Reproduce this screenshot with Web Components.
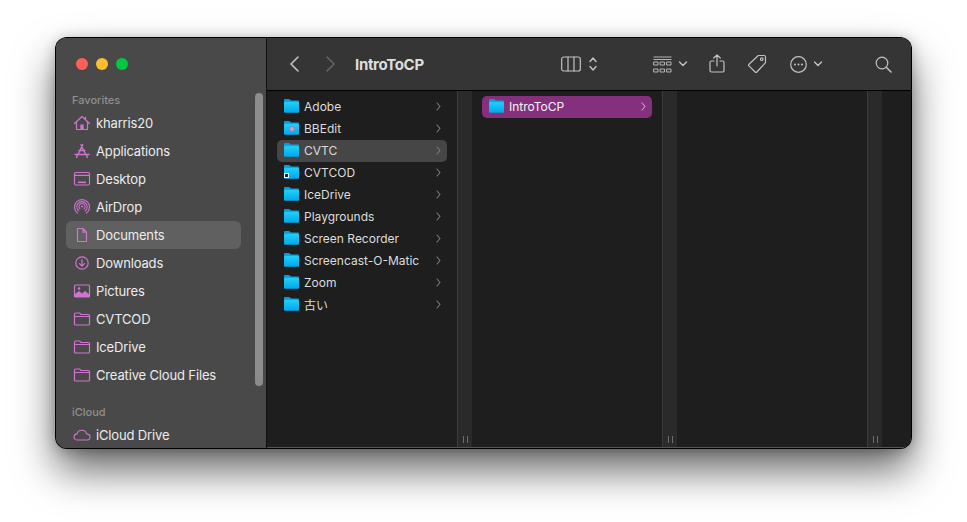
<!DOCTYPE html>
<html lang="en"><head><meta charset="utf-8"><title>Finder</title>
<style>
html,body{margin:0;background:#fff;height:522px;overflow:hidden}
body{font-family:Inter,"Noto Sans CJK JP",sans-serif;-webkit-font-smoothing:antialiased}
</style></head><body>
<finder-window>
  <finder-sidebar slot="side">
    <side-label>Favorites</side-label>
    <side-item icon="home">kharris20</side-item>
    <side-item icon="apps">Applications</side-item>
    <side-item icon="desktop">Desktop</side-item>
    <side-item icon="airdrop">AirDrop</side-item>
    <side-item icon="doc" selected>Documents</side-item>
    <side-item icon="download">Downloads</side-item>
    <side-item icon="pictures">Pictures</side-item>
    <side-item icon="folder">CVTCOD</side-item>
    <side-item icon="folder">IceDrive</side-item>
    <side-item icon="folder">Creative Cloud Files</side-item>
    <side-label second>iCloud</side-label>
    <side-item icon="cloud">iCloud Drive</side-item>
  </finder-sidebar>
  <finder-toolbar slot="bar" title-text="IntroToCP"></finder-toolbar>
  <finder-column slot="cols">
    <file-row>Adobe</file-row>
    <file-row badge="bb">BBEdit</file-row>
    <file-row state="grey">CVTC</file-row>
    <file-row badge="alias">CVTCOD</file-row>
    <file-row>IceDrive</file-row>
    <file-row>Playgrounds</file-row>
    <file-row>Screen Recorder</file-row>
    <file-row>Screencast-O-Matic</file-row>
    <file-row>Zoom</file-row>
    <file-row>古い</file-row>
  </finder-column>
  <finder-column slot="cols"><file-row state="active">IntroToCP</file-row></finder-column>
  <finder-column slot="cols"></finder-column>
  <finder-column slot="cols" last></finder-column>
</finder-window>
<script>
const PINK='#cf74cf';
const SW='1.200';
const ICONS={
home:`<path d="M1.500 9.500 9 2.500l7.500 7M3.500 8v7.500h11V8M12.500 3.200v2.800" fill="none" stroke="${PINK}" stroke-width="${SW}" stroke-linejoin="round" stroke-linecap="round"/><rect x="7.300" y="10.500" width="3.400" height="5" fill="${PINK}"/>`,
apps:`<path d="M9.800 2.500 4.800 13M7.800 2.500l5.200 10.500M2 12.500h14M4.200 13 3.500 15.500M13.500 13l.8 2.500M6 8.500h6" fill="none" stroke="${PINK}" stroke-width="1.300" stroke-linecap="round"/>`,
desktop:`<rect x="1.500" y="2.500" width="15" height="12.500" rx="1.500" fill="none" stroke="${PINK}" stroke-width="${SW}"/><path d="M1.500 5.300h15" stroke="${PINK}" stroke-width="${SW}"/><rect x="5" y="11.500" width="8" height="1.600" fill="${PINK}"/>`,
airdrop:`<g fill="none" stroke="${PINK}" stroke-width="1.100" stroke-linecap="round"><path d="M4.600 15.200a7.500 7.500 0 1 1 8.800 0"/><path d="M5.800 12.900a5.200 5.200 0 1 1 6.400 0"/><path d="M7 10.800a3 3 0 1 1 4 0"/></g><circle cx="9" cy="8.500" r="1.100" fill="${PINK}"/>`,
doc:`<path d="M4.500 2.500h5.500l3.500 3.700v9.300h-9zM10 2.500v3.700h3.500" fill="none" stroke="${PINK}" stroke-width="${SW}" stroke-linejoin="round"/>`,
download:`<circle cx="9" cy="9" r="6.200" fill="none" stroke="${PINK}" stroke-width="${SW}"/><path d="M9 5.500v6.500M6.500 9.700 9 12.200l2.500-2.500" fill="none" stroke="${PINK}" stroke-width="${SW}" stroke-linecap="round" stroke-linejoin="round"/>`,
pictures:`<rect x="1.500" y="3" width="15" height="12" rx="1" fill="none" stroke="${PINK}" stroke-width="${SW}"/><path d="M1.500 15v-2.500l4.500-3.500 3 2.500 3-2.500 4.500 3.500V15z" fill="${PINK}"/><circle cx="6" cy="6.500" r="1.300" fill="${PINK}"/>`,
folder:`<path d="M1.500 5.500V4.300C1.500 3.600 2 3 2.700 3h3.600c.5 0 .8.200 1.100.6l.6.900h7c.7 0 1.500.4 1.500 1v8.700c0 .5-.5.800-1 .8H2.500c-.6 0-1-.3-1-.8V5.500zM1.500 6.500h15" fill="none" stroke="${PINK}" stroke-width="${SW}" stroke-linejoin="round"/>`,
cloud:`<path d="M4.500 14C2.500 14 1 12.600 1 10.900c0-1.600 1.200-2.800 2.900-3C4.600 5.600 6.400 4.200 8.700 4.200c2.500 0 4.300 1.500 4.900 3.700 1.900.2 3.400 1.400 3.400 3 0 1.700-1.400 3.100-3.400 3.100z" fill="none" stroke="${PINK}" stroke-width="1.100"/>`
};

function tpl(css,html){const t=document.createElement('template');t.innerHTML=`<style>${css}</style>${html}`;return t}
function define(name,t,extra){customElements.define(name,class extends HTMLElement{
  constructor(){super();this.attachShadow({mode:'open'}).appendChild(t.content.cloneNode(true));}
  connectedCallback(){extra&&extra.call(this,this.shadowRoot)}
})}

define('finder-window',tpl(`
:host{display:block;position:absolute;left:56px;top:38px;width:855px;height:410px;border-radius:11px;
 box-shadow:0 0 0 1px #000,0 22px 42px rgba(0,0,0,.6),0 2px 14px rgba(0,0,0,.28);}
.w{display:grid;grid-template-columns:210px 1fr;height:100%;border-radius:11px;overflow:hidden;background:#1e1e1e}
.main{display:flex;flex-direction:column;min-width:0;border-left:1px solid #111}
.cols{flex:1;display:flex;min-height:0;position:relative;border-bottom:1px solid #555}
`,`<div class="w"><slot name="side"></slot><div class="main"><slot name="bar"></slot><div class="cols"><slot name="cols"></slot></div></div></div>`));

define('finder-sidebar',tpl(`
:host{display:block;background:#494949;position:relative;height:100%;overflow:hidden}
.lights{display:flex;gap:8px;padding:20px 0 0 20px;height:12px}
.lights i{width:12px;height:12px;border-radius:50%}
.list{display:flex;flex-direction:column;padding:21px 25px 0 10px}
.thumb{position:absolute;left:199px;top:55px;width:8px;height:293px;border-radius:4px;background:#8c8c8c}
`,`<div class="lights"><i style="background:#ff5f57"></i><i style="background:#febc2e"></i><i style="background:#00c941"></i></div>
<div class="list"><slot></slot></div><div class="thumb"></div>`));

define('side-label',tpl(`
:host{display:block;height:18px;line-height:18px;padding-left:6px;font-size:11px;font-weight:500;color:#8f8f8f}
:host([second]){margin-top:14px}
`,`<slot></slot>`));

define('side-item',tpl(`
:host{display:flex;align-items:center;height:28px;border-radius:6px;padding-left:7px;gap:5px;font-size:13px;color:#ececec;white-space:nowrap;letter-spacing:-.15px}
:host([selected]){background:#5f605f}
svg{width:18px;height:18px;flex:none}
`,`<svg viewBox="0 0 18 18"></svg><span><slot></slot></span>`),function(r){r.querySelector('svg').innerHTML=ICONS[this.getAttribute('icon')]||''});

define('finder-toolbar',tpl(`
:host{display:flex;align-items:center;height:53px;box-sizing:border-box;background:#353535;border-bottom:1px solid #000;color:#c4c4c4;position:relative}
svg{display:block;fill:none;stroke:#c2c2c2;stroke-width:1.200;stroke-linecap:round;stroke-linejoin:round;flex:none}
.nav{display:flex;align-items:center;gap:24px;margin-left:21px}
h1{margin:0 0 0 19px;font-size:15px;font-weight:700;color:#dedede;letter-spacing:-.32px;width:206px;white-space:nowrap}
.tools{display:flex;align-items:center}
`,`<div class="nav">
<svg width="12" height="18" viewBox="0 0 12 18"><path d="M10 2 3 9l7 7" style="stroke-width:1.600"/></svg>
<svg width="12" height="18" viewBox="0 0 12 18"><path d="M3 2l7 7-7 7" style="stroke:#636363;stroke-width:1.600"/></svg>
</div><h1></h1>
<div class="tools">
<svg width="20" height="16" viewBox="0 0 20 16"><rect x=".7" y="1" width="18.600" height="14" rx="2"/><path d="M7 1v14M13 1v14"/></svg>
<svg width="10" height="16" viewBox="0 0 10 16" style="margin-left:7px"><path d="M2 5.500l3-3.500 3 3.500M2 10.500 5 14l3-3.500" style="stroke-width:1.400"/></svg>
<svg width="19" height="18" viewBox="0 0 19 18" style="margin-left:55px;margin-top:1px"><path d="M.5 1h18M.5 3.500h18" style="stroke-width:.9;stroke-linecap:butt"/><g style="stroke-width:.9"><rect x="1" y="6" width="4" height="3"/><rect x="7.500" y="6" width="4" height="3"/><rect x="14" y="6" width="4" height="3"/><rect x="1" y="13" width="4" height="3"/><rect x="7.500" y="13" width="4" height="3"/><rect x="14" y="13" width="4" height="3"/></g></svg>
<svg width="10" height="8" viewBox="0 0 10 8" style="margin-left:6px"><path d="M1.500 2 5 5.500 8.500 2" style="stroke-width:1.400"/></svg>
<svg width="16" height="20" viewBox="0 0 16 20" style="margin-left:21px"><path d="M5 7H2.500C1.700 7 1 7.600 1 8.500v8.300C1 17.500 1.700 18 2.500 18h11c.8 0 1.500-.6 1.500-1.300V8.500C15 7.600 14.300 7 13.500 7H11M8 12V1M4.700 4 8 1l3.300 3"/></svg>
<svg width="20" height="20" viewBox="0 0 20 20" style="margin-left:22px"><path d="M11.300 1.500h5.700c.8 0 1.500.7 1.500 1.500v5.700L9.800 18c-.5.500-1.200.5-1.700 0L2 11.900c-.5-.5-.5-1.200 0-1.700z"/><circle cx="14.800" cy="5.200" r="1.300"/></svg>
<svg width="17" height="17" viewBox="0 0 17 17" style="margin-left:23px"><circle cx="8.500" cy="8.500" r="7.800"/><g style="fill:#c2c2c2;stroke:none"><circle cx="5" cy="8.500" r="1"/><circle cx="8.500" cy="8.500" r="1"/><circle cx="12" cy="8.500" r="1"/></g></svg>
<svg width="10" height="8" viewBox="0 0 10 8" style="margin-left:6px"><path d="M1.500 2 5 5.500 8.500 2" style="stroke-width:1.400"/></svg>
<svg width="17" height="17" viewBox="0 0 17 17" style="margin-left:52px"><circle cx="7" cy="7" r="5.800"/><path d="M11.300 11.300l4.700 4.700" style="stroke-width:1.500"/></svg>
</div>`),function(r){r.querySelector('h1').textContent=this.getAttribute('title-text')});

define('finder-column',tpl(`
:host{display:flex;width:205px;flex:none;box-sizing:border-box;background:#1e1e1e}
:host([last]){flex:1;width:auto}
.list{width:190px;flex:none;box-sizing:border-box;padding:5px 10px 0;display:flex;flex-direction:column}
.gut{width:15px;flex:none;box-sizing:border-box;background:#2a2a2a;border-left:1px solid #3c3c3c;display:flex;align-items:flex-end;justify-content:center;gap:3px;padding-bottom:4px}
.gut i{width:1px;height:7px;background:#6d6d6d}
:host([last]) .gut{display:none}
`,`<div class="list"><slot></slot></div><div class="gut"><i></i><i></i></div>`));

const FOLDER=`<svg viewBox="0 0 15 14" width="15" height="14"><defs><linearGradient id="g" x1="0" y1="0" x2="0" y2="1"><stop offset="0" stop-color="#1fd0fb"/><stop offset="1" stop-color="#04a6ea"/></linearGradient></defs>
<path d="M0 3V1.200C0 .5.500 0 1.200 0h3.600c.5 0 .8.200 1.100.5L7 1.600h6.800c.7 0 1.200.5 1.200 1.200V3z" fill="#0a9bdc"/><rect y="2.800" width="15" height="11" rx="1" fill="url(#g)"/></svg>`;
define('file-row',tpl(`
:host{display:flex;align-items:center;box-sizing:border-box;height:22px;flex:none;border-radius:5px;padding:0 6px 2px 7px;font-size:12px;color:#dcdcdc;position:relative;white-space:nowrap}
:host([state=grey]){background:#464646}
:host([state=active]){background:#84307c;color:#f4f4f4}
.ic{position:relative;width:15px;height:14px;margin-right:5px;flex:none}
.ic svg{display:block}
.bb{position:absolute;left:4.500px;top:5px;width:6px;height:6px;border-radius:50%;background:radial-gradient(#c8a2c4 30%,#5d78b8 85%)}
.al{position:absolute;left:0;top:8px;width:3px;height:3px;background:#222;border:1px solid #fff;box-sizing:content-box}
.t{flex:1}
.ch{width:5px;height:9px;flex:none}
`,`<span class="ic">${FOLDER}</span><span class="t"><slot></slot></span>
<svg class="ch" viewBox="0 0 5 9" fill="none" stroke="#7e7e7e" stroke-width="1.100" stroke-linecap="round" stroke-linejoin="round"><path d="M1 1l3 3.500L1 8"/></svg>`),function(r){
 const b=this.getAttribute('badge'),ic=r.querySelector('.ic');
 if(b==='bb')ic.insertAdjacentHTML('beforeend','<i class="bb"></i>');
 if(b==='alias')ic.insertAdjacentHTML('beforeend','<i class="al"></i>');
 if(this.getAttribute('state')==='active'){r.querySelector('.ch').setAttribute('stroke','#c9a2c6')}
});
</script>
</body></html>
